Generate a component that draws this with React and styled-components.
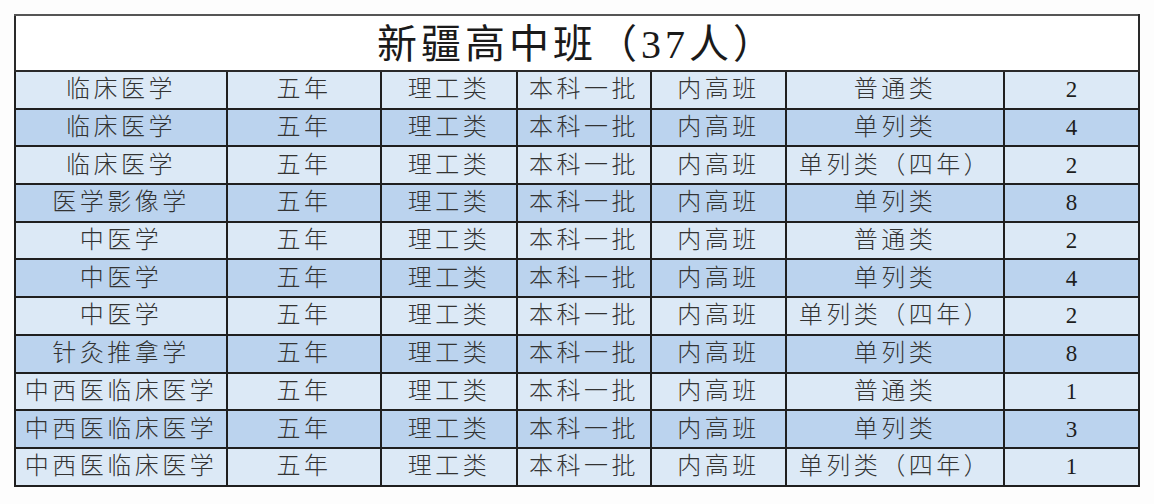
import React from 'react'
import styled, { createGlobalStyle } from 'styled-components'

const Global = createGlobalStyle`
  html, body {
    margin: 0;
    padding: 0;
    background: #ffffff;
  }
  body {
    font-family: "Liberation Serif", "Noto Sans CJK SC", serif;
  }
`

const Page = styled.div`
  width: 1154px;
  height: 504px;
  padding: 14px 0 0 14px;
  box-sizing: border-box;
  background: #fdfdfd;
`

const Table = styled.table`
  width: 1124px;
  border-collapse: collapse;
  table-layout: fixed;
  border: 2px solid #2a2a2a;
  color: #2e2e2e;
`

const TitleCell = styled.th`
  height: 56px;
  padding: 4px 0 0 0;
  box-sizing: border-box;
  background: #ffffff;
  border: 2px solid #2a2a2a;
  border-top-color: #555;
  font-size: 40px;
  font-weight: normal;
  letter-spacing: 4px;
  line-height: 50px;
  text-align: center;
  color: #1a1a1a;
`

const Row = styled.tr`
  height: 37.7px;
  background: ${p => (p.$dark ? '#bbd3ee' : '#dce9f6')};
`

const Cell = styled.td`
  padding: 0;
  border: 2px solid #1f1f1f;
  font-size: ${p => (p.$num ? '23px' : '24px')};
  font-weight: ${p => (p.$num ? 'normal' : 300)};
  color: ${p => (p.$num ? '#1e1e1e' : '#333')};
  letter-spacing: ${p => (p.$num ? '0' : '3.5px')};
  text-align: center;
  white-space: nowrap;
  overflow: hidden;
  line-height: 33px;
`

const widths = [212, 154, 136, 134, 135, 218, 135]

const rows = [
  ['临床医学', '五年', '理工类', '本科一批', '内高班', '普通类', '2'],
  ['临床医学', '五年', '理工类', '本科一批', '内高班', '单列类', '4'],
  ['临床医学', '五年', '理工类', '本科一批', '内高班', '单列类（四年）', '2'],
  ['医学影像学', '五年', '理工类', '本科一批', '内高班', '单列类', '8'],
  ['中医学', '五年', '理工类', '本科一批', '内高班', '普通类', '2'],
  ['中医学', '五年', '理工类', '本科一批', '内高班', '单列类', '4'],
  ['中医学', '五年', '理工类', '本科一批', '内高班', '单列类（四年）', '2'],
  ['针灸推拿学', '五年', '理工类', '本科一批', '内高班', '单列类', '8'],
  ['中西医临床医学', '五年', '理工类', '本科一批', '内高班', '普通类', '1'],
  ['中西医临床医学', '五年', '理工类', '本科一批', '内高班', '单列类', '3'],
  ['中西医临床医学', '五年', '理工类', '本科一批', '内高班', '单列类（四年）', '1'],
]

export default function App() {
  return (
    <>
      <Global />
      <Page>
        <Table>
          <colgroup>
            {widths.map((w, i) => <col key={i} style={{ width: w }} />)}
          </colgroup>
          <thead>
            <tr>
              <TitleCell colSpan={7}>新疆高中班（37人）</TitleCell>
            </tr>
          </thead>
          <tbody>
            {rows.map((r, i) => (
              <Row key={i} $dark={i % 2 === 1}>
                {r.map((c, j) => (
                  <Cell key={j} $num={j === 6}>{c}</Cell>
                ))}
              </Row>
            ))}
          </tbody>
        </Table>
      </Page>
    </>
  )
}
